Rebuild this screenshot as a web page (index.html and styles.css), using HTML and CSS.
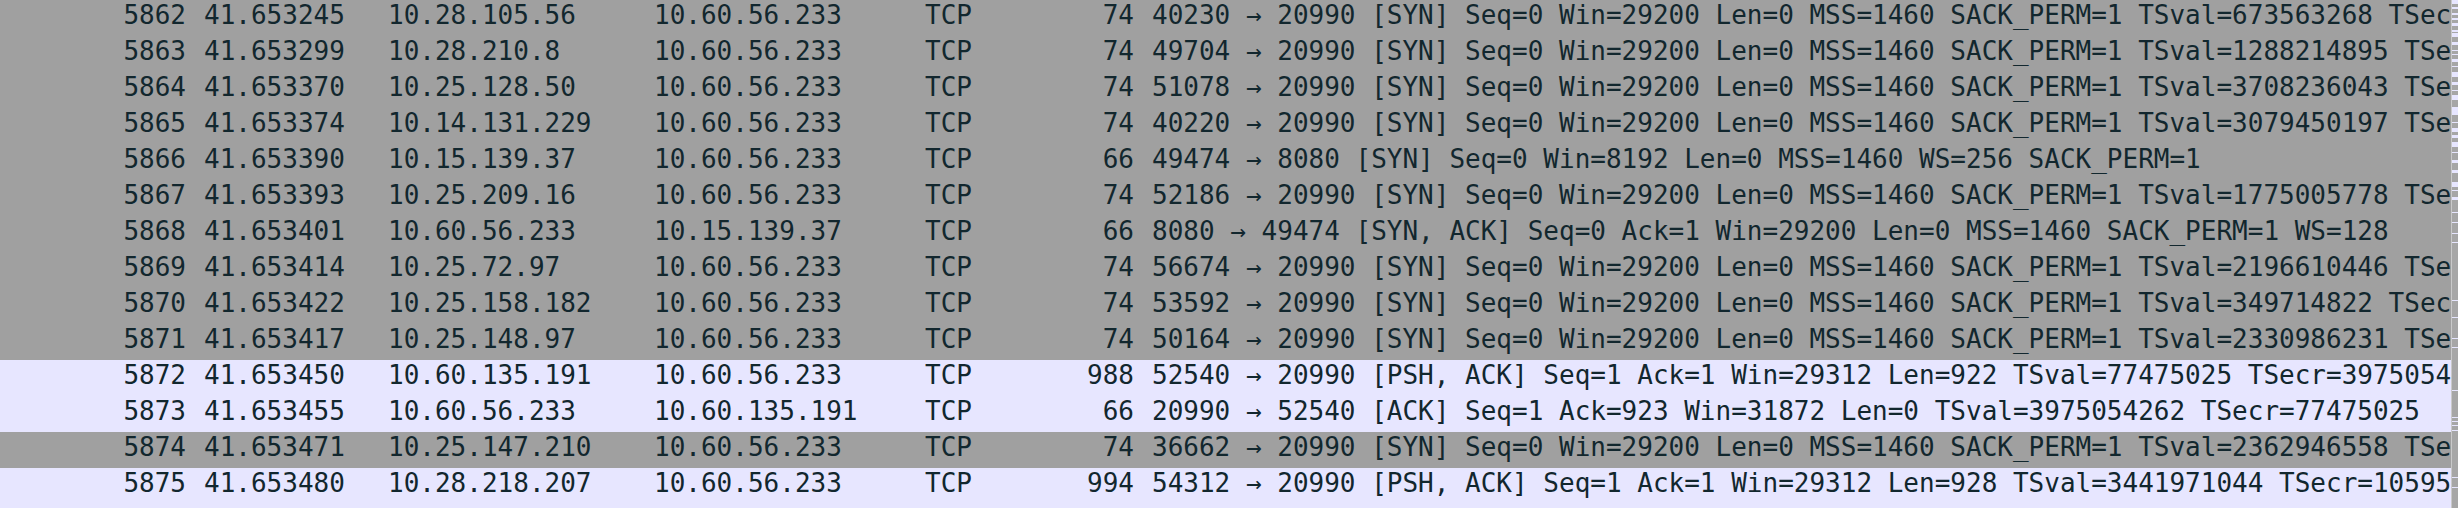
FILE: index.html
```html
<!DOCTYPE html>
<html>
<head>
<meta charset="utf-8">
<link rel="stylesheet" href="styles.css">
</head>
<body>
<div class="pane">
  <div class="list">
    <div class="row syn"><span class="no">5862</span><span class="time">41.653245</span><span class="src">10.28.105.56</span><span class="dst">10.60.56.233</span><span class="proto">TCP</span><span class="len">74</span><span class="info">40230 → 20990 [SYN] Seq=0 Win=29200 Len=0 MSS=1460 SACK_PERM=1 TSval=673563268 TSecr=0 WS=128</span></div>
    <div class="row syn"><span class="no">5863</span><span class="time">41.653299</span><span class="src">10.28.210.8</span><span class="dst">10.60.56.233</span><span class="proto">TCP</span><span class="len">74</span><span class="info">49704 → 20990 [SYN] Seq=0 Win=29200 Len=0 MSS=1460 SACK_PERM=1 TSval=1288214895 TSecr=0 WS=128</span></div>
    <div class="row syn"><span class="no">5864</span><span class="time">41.653370</span><span class="src">10.25.128.50</span><span class="dst">10.60.56.233</span><span class="proto">TCP</span><span class="len">74</span><span class="info">51078 → 20990 [SYN] Seq=0 Win=29200 Len=0 MSS=1460 SACK_PERM=1 TSval=3708236043 TSecr=0 WS=128</span></div>
    <div class="row syn"><span class="no">5865</span><span class="time">41.653374</span><span class="src">10.14.131.229</span><span class="dst">10.60.56.233</span><span class="proto">TCP</span><span class="len">74</span><span class="info">40220 → 20990 [SYN] Seq=0 Win=29200 Len=0 MSS=1460 SACK_PERM=1 TSval=3079450197 TSecr=0 WS=128</span></div>
    <div class="row syn"><span class="no">5866</span><span class="time">41.653390</span><span class="src">10.15.139.37</span><span class="dst">10.60.56.233</span><span class="proto">TCP</span><span class="len">66</span><span class="info">49474 → 8080 [SYN] Seq=0 Win=8192 Len=0 MSS=1460 WS=256 SACK_PERM=1</span></div>
    <div class="row syn"><span class="no">5867</span><span class="time">41.653393</span><span class="src">10.25.209.16</span><span class="dst">10.60.56.233</span><span class="proto">TCP</span><span class="len">74</span><span class="info">52186 → 20990 [SYN] Seq=0 Win=29200 Len=0 MSS=1460 SACK_PERM=1 TSval=1775005778 TSecr=0 WS=128</span></div>
    <div class="row syn"><span class="no">5868</span><span class="time">41.653401</span><span class="src">10.60.56.233</span><span class="dst">10.15.139.37</span><span class="proto">TCP</span><span class="len">66</span><span class="info">8080 → 49474 [SYN, ACK] Seq=0 Ack=1 Win=29200 Len=0 MSS=1460 SACK_PERM=1 WS=128</span></div>
    <div class="row syn"><span class="no">5869</span><span class="time">41.653414</span><span class="src">10.25.72.97</span><span class="dst">10.60.56.233</span><span class="proto">TCP</span><span class="len">74</span><span class="info">56674 → 20990 [SYN] Seq=0 Win=29200 Len=0 MSS=1460 SACK_PERM=1 TSval=2196610446 TSecr=0 WS=128</span></div>
    <div class="row syn"><span class="no">5870</span><span class="time">41.653422</span><span class="src">10.25.158.182</span><span class="dst">10.60.56.233</span><span class="proto">TCP</span><span class="len">74</span><span class="info">53592 → 20990 [SYN] Seq=0 Win=29200 Len=0 MSS=1460 SACK_PERM=1 TSval=349714822 TSecr=0 WS=128</span></div>
    <div class="row syn"><span class="no">5871</span><span class="time">41.653417</span><span class="src">10.25.148.97</span><span class="dst">10.60.56.233</span><span class="proto">TCP</span><span class="len">74</span><span class="info">50164 → 20990 [SYN] Seq=0 Win=29200 Len=0 MSS=1460 SACK_PERM=1 TSval=2330986231 TSecr=0 WS=128</span></div>
    <div class="row tcp"><span class="no">5872</span><span class="time">41.653450</span><span class="src">10.60.135.191</span><span class="dst">10.60.56.233</span><span class="proto">TCP</span><span class="len">988</span><span class="info">52540 → 20990 [PSH, ACK] Seq=1 Ack=1 Win=29312 Len=922 TSval=77475025 TSecr=3975054262</span></div>
    <div class="row tcp"><span class="no">5873</span><span class="time">41.653455</span><span class="src">10.60.56.233</span><span class="dst">10.60.135.191</span><span class="proto">TCP</span><span class="len">66</span><span class="info">20990 → 52540 [ACK] Seq=1 Ack=923 Win=31872 Len=0 TSval=3975054262 TSecr=77475025</span></div>
    <div class="row syn"><span class="no">5874</span><span class="time">41.653471</span><span class="src">10.25.147.210</span><span class="dst">10.60.56.233</span><span class="proto">TCP</span><span class="len">74</span><span class="info">36662 → 20990 [SYN] Seq=0 Win=29200 Len=0 MSS=1460 SACK_PERM=1 TSval=2362946558 TSecr=0 WS=128</span></div>
    <div class="row tcp"><span class="no">5875</span><span class="time">41.653480</span><span class="src">10.28.218.207</span><span class="dst">10.60.56.233</span><span class="proto">TCP</span><span class="len">994</span><span class="info">54312 → 20990 [PSH, ACK] Seq=1 Ack=1 Win=29312 Len=928 TSval=3441971044 TSecr=1059578820</span></div>
    <div class="row tcp"><span class="no">5876</span><span class="time">41.653486</span><span class="src">10.60.56.233</span><span class="dst">10.28.218.207</span><span class="proto">TCP</span><span class="len">66</span><span class="info">20990 → 54312 [ACK] Seq=1 Ack=929 Win=31872 Len=0 TSval=3975054263 TSecr=3441971044</span></div>
  </div>
  <div class="minimap">
    <svg width="6" height="508" viewBox="0 0 6 508">
      <g fill="#e7e6ff">
        <rect x="0" y="0" width="6" height="4"/>
        <rect x="0" y="7" width="6" height="2"/>
        <rect x="0" y="13" width="6" height="2"/>
        <rect x="0" y="18" width="6" height="2"/>
        <rect x="0" y="23" width="6" height="3"/>
        <rect x="0" y="30" width="6" height="2"/>
        <rect x="0" y="33" width="6" height="4"/>
        <rect x="0" y="42" width="6" height="3"/>
        <rect x="0" y="50" width="6" height="1"/>
        <rect x="0" y="54" width="6" height="1"/>
        <rect x="0" y="59" width="6" height="3"/>
        <rect x="0" y="66" width="6" height="1"/>
        <rect x="0" y="72" width="6" height="5"/>
        <rect x="0" y="82" width="6" height="3"/>
        <rect x="0" y="90" width="6" height="1"/>
        <rect x="0" y="95" width="6" height="5"/>
        <rect x="0" y="107" width="6" height="8"/>
        <rect x="0" y="122" width="6" height="1"/>
        <rect x="0" y="128" width="6" height="4"/>
        <rect x="0" y="135" width="6" height="3"/>
        <rect x="0" y="142" width="6" height="5"/>
        <rect x="0" y="152" width="6" height="1"/>
        <rect x="0" y="160" width="6" height="3"/>
        <rect x="0" y="170" width="6" height="3"/>
        <rect x="0" y="182" width="6" height="5"/>
        <rect x="0" y="190" width="6" height="1"/>
        <rect x="0" y="197" width="6" height="3"/>
        <rect x="0" y="212" width="6" height="1"/>
        <rect x="0" y="222" width="6" height="1"/>
        <rect x="0" y="233" width="6" height="1"/>
        <rect x="0" y="242" width="6" height="1"/>
        <rect x="0" y="300" width="6" height="1"/>
        <rect x="0" y="317" width="6" height="1"/>
        <rect x="0" y="338" width="6" height="1"/>
        <rect x="0" y="347" width="6" height="1"/>
        <rect x="0" y="390" width="6" height="1"/>
        <rect x="0" y="417" width="6" height="1"/>
        <rect x="0" y="421" width="6" height="1"/>
        <rect x="0" y="425" width="6" height="1"/>
        <rect x="0" y="430" width="6" height="1"/>
        <rect x="0" y="477" width="6" height="1"/>
        <rect x="0" y="487" width="6" height="1"/>
      </g>
    </svg>
  </div>
</div>
</body>
</html>
```

FILE: styles.css
```css
html, body {
  margin: 0;
  padding: 0;
  background: #a0a0a0;
}

.pane {
  display: flex;
  width: 2458px;
  height: 508px;
  overflow: hidden;
}

.list {
  flex: 1;
  min-width: 0;
  display: flex;
  flex-direction: column;
  overflow: hidden;
}

.row {
  display: flex;
  flex: none;
  height: 36px;
  box-sizing: border-box;
  padding-bottom: 6px;
  line-height: 30px;
  font-family: "DejaVu Sans Mono", monospace;
  font-size: 26px;
  color: #12272e;
  white-space: pre;
}

.row.syn { background: #a0a0a0; }
.row.tcp { background: #e7e6ff; }

.row span { flex: none; overflow: hidden; }

.no { width: 186px; text-align: right; }
.time { margin-left: 18px; width: 184px; }
.src { width: 266px; }
.dst { width: 271px; }
.proto { width: 120px; }
.len { width: 89px; text-align: right; }
.info { margin-left: 18px; flex: 1 1 auto !important; min-width: 0; }

.minimap {
  flex: none;
  width: 6px;
  height: 508px;
  background: #a6a6a6;
  border-left: 1px solid #c9c9c9;
}

.minimap svg { display: block; }
```
